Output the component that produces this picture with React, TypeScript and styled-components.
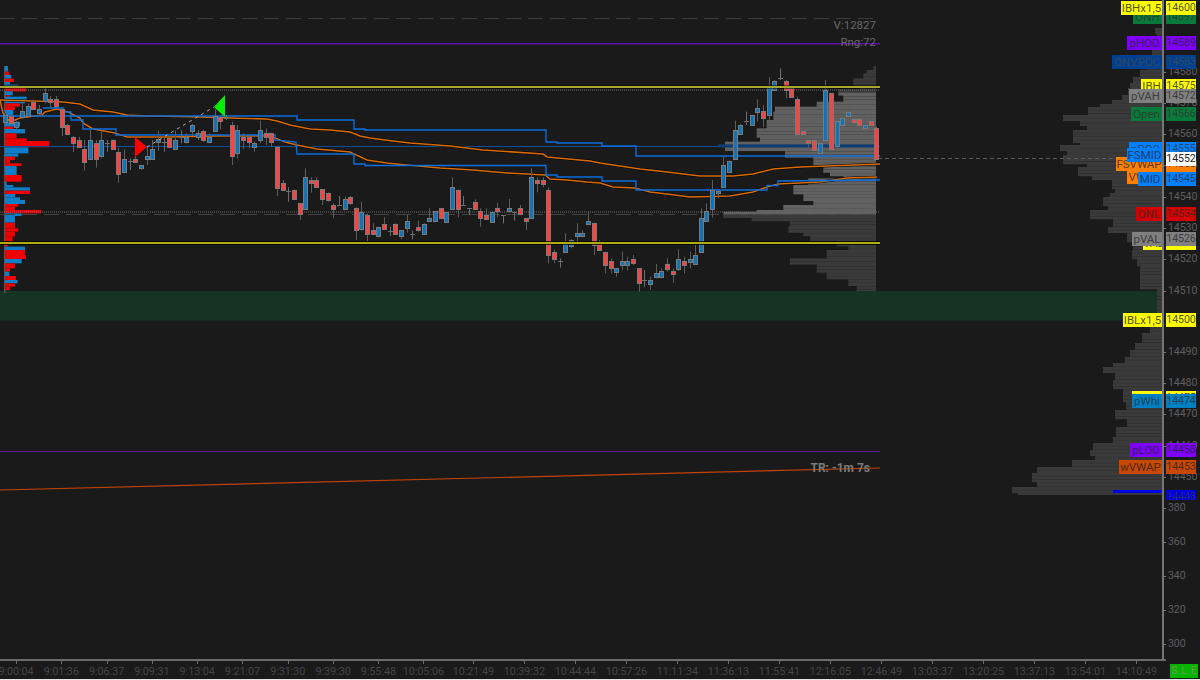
import React from "react";
import styled, { createGlobalStyle } from "styled-components";

const Global = createGlobalStyle`
  html, body { margin: 0; padding: 0; background: #1a1a1a; overflow: hidden; }
  #root { width: 1200px; height: 680px; }
`;

const FONT = `Roboto, "Open Sans", sans-serif`;

const Page = styled.div`
  width: 1200px;
  height: 680px;
  display: flex;
  flex-direction: column;
  background: #1a1a1a;
  font-family: ${FONT};
  overflow: hidden;
`;
const Main = styled.div`
  flex: 0 0 660px;
  display: flex;
`;
const Plot = styled.div`
  position: relative;
  flex: 0 0 1162px;
  height: 660px;
`;
const ChartSvg = styled.svg`
  display: block;
  width: 1162px;
  height: 660px;
`;
const Stat = styled.div<{ $y: number; $right: number; $bold?: boolean }>`
  position: absolute;
  top: ${(p) => p.$y}px;
  right: ${(p) => p.$right}px;
  font-size: ${(p) => (p.$bold ? 12 : 11.5)}px;
  line-height: 14px;
  color: ${(p) => (p.$bold ? "#7a7a7a" : "#686868")};
  font-weight: ${(p) => (p.$bold ? 700 : 400)};
`;
const PriceScale = styled.div`
  position: relative;
  flex: 0 0 38px;
  height: 660px;
  box-sizing: border-box;
  border-left: 2px solid #767676;
  z-index: 2;
`;
const ScaleMark = styled.div<{ $y: number }>`
  position: absolute;
  left: 4px;
  top: ${(p) => p.$y - 7}px;
  font-size: 10.6px;
  line-height: 14px;
  color: #5e5e5e;
  letter-spacing: -0.1px;
  &::before {
    content: "";
    position: absolute;
    left: -4px;
    top: 7px;
    width: 2px;
    height: 1px;
    background: #767676;
  }
`;
const Tag = styled.div<{ $y: number; $h: number; $bg: string; $fg: string }>`
  position: absolute;
  top: ${(p) => p.$y}px;
  height: ${(p) => p.$h}px;
  background: ${(p) => p.$bg};
  color: ${(p) => p.$fg};
  line-height: 14px;
  text-align: center;
  white-space: nowrap;
  overflow: hidden;
`;
const NameTag = styled(Tag)<{ $w: number }>`
  right: calc(100% + 2px);
  width: ${(p) => p.$w}px;
  font-size: 11.5px;
`;
const ValueTag = styled(Tag)`
  left: 2px;
  width: 30px;
  font-size: 10.6px;
  letter-spacing: -0.1px;
`;
const TimeRow = styled.div`
  flex: 1;
  display: flex;
  border-bottom: 1px solid #e6e6e6;
`;
const TimeAxis = styled.div`
  flex: 0 0 1164px;
  height: 19px;
  box-sizing: border-box;
  display: flex;
  padding-left: 16px;
  border-top: 2px solid #6a6a6a;
  margin-top: -1px;
`;
const TimeCell = styled.div<{ $w: number }>`
  position: relative;
  flex: 0 0 ${(p) => p.$w}px;
  &::before {
    content: "";
    position: absolute;
    left: 0;
    top: 0;
    width: 1px;
    height: 3px;
    background: #6a6a6a;
  }
`;
const TimeText = styled.span`
  position: absolute;
  left: 0;
  top: 4px;
  transform: translateX(-50%);
  font-size: 10.8px;
  line-height: 14px;
  letter-spacing: -0.05px;
  color: #464646;
`;
const StatusWrap = styled.div`
  flex: 1;
  display: flex;
  justify-content: flex-end;
  align-items: flex-end;
  padding: 0 2px 1px 0;
`;
const Status = styled.div`
  width: 28px;
  height: 14px;
  background: #00b400;
  color: #5f9c48;
  font-size: 10.5px;
  font-weight: 500;
  line-height: 14px;
  text-align: center;
  letter-spacing: 0.5px;
`;

type C = [number, number, number, number, number, string];
const seg1: C[] = [
  [15,165,185,165,185,"B"],[32,165,195,168,188,"R"],[49,182,208,187,203,"B"],[66,125,175,153,172,"B"],[83,130,170,138,167,"B"],
  [100,118,150,127,147,"R"],[117,135,168,146,158,"B"],[134,82,130,100,125,"B"],[151,108,145,118,128,"R"],[168,108,140,118,138,"R"],
  [185,145,228,148,203,"R"],[202,192,222,194,221,"R"],[219,228,276,232,249,"R"],[236,230,262,240,260,"R"],[253,240,332,267,305,"R"],
  [270,210,300,240,297,"B"],[287,240,323,248,297,"R"],[304,210,295,240,289,"B"],[321,240,275,248,248,"D"],[338,238,270,240,268,"R"],
  [355,262,368,276,342,"R"],[372,268,335,296,334,"B"],[389,295,330,304,304,"D"],[406,285,308,296,305,"R"],[423,315,330,316,326,"B"],
  [440,258,315,288,297,"B"],[457,240,298,268,297,"B"],[474,212,272,238,248,"B"],[491,235,275,245,245,"D"],[508,232,262,233,260,"R"],
  [525,212,270,240,268,"B"],[542,210,250,232,232,"D"],[559,220,250,232,248,"B"],[576,192,228,194,212,"B"],[593,210,240,220,232,"B"],
  [610,210,245,212,240,"R"],[627,220,250,232,248,"B"],[644,148,212,167,212,"B"],[661,170,208,172,185,"R"],[678,165,180,174,174,"D"],
  [695,185,315,195,288,"R"],[712,195,295,210,278,"B"],[729,220,268,232,240,"R"],[746,222,265,232,248,"R"],[763,245,275,248,260,"B"],
  [780,182,250,211,240,"B"],[797,205,255,220,232,"R"],[814,218,260,220,248,"R"],[831,258,408,260,382,"R"],[848,360,392,370,390,"R"],
  [865,382,425,394,394,"D"],[882,388,420,390,418,"R"],[899,428,480,428,462,"R"],
];
const seg2: C[] = [
  [15,205,330,232,327,"B"],[32,232,278,240,250,"R"],[49,232,262,240,262,"R"],[66,268,315,268,298,"R"],[83,277,305,278,300,"R"],
  [100,310,355,315,327,"R"],[117,288,318,314,314,"D"],[134,290,328,298,327,"B"],[151,288,315,290,307,"R"],[167,322,420,325,392,"R"],
  [184,305,393,335,385,"B"],[201,340,425,344,400,"R"],[218,370,402,390,402,"R"],[235,380,412,382,410,"B"],[252,352,388,371,385,"R"],
  [269,380,408,392,392,"D"],[286,370,402,371,400,"R"],[303,390,418,391,410,"B"],[320,345,398,362,384,"B"],[337,392,418,402,402,"D"],
  [354,362,395,382,392,"R"],[371,370,402,371,401,"B"],[388,325,365,354,364,"B"],[405,333,365,334,364,"B"],[422,325,358,325,355,"R"],
  [439,335,365,335,364,"B"],[456,232,328,262,327,"B"],[473,268,352,270,327,"R"],[490,288,318,314,314,"D"],[507,325,345,325,325,"D"],
  [524,298,328,307,327,"R"],[541,325,380,334,355,"R"],[558,325,358,345,356,"R"],[575,335,365,335,364,"B"],[592,308,352,325,335,"R"],
  [609,345,370,345,345,"D"],[626,297,338,325,335,"B"],[643,335,362,335,335,"D"],[660,315,345,325,343,"R"],[677,354,390,355,364,"R"],
  [694,205,357,232,355,"B"],[711,232,277,240,250,"R"],[728,232,262,240,252,"R"],[745,262,490,270,465,"R"],[762,448,490,456,477,"R"],
  [779,475,503,484,484,"D"],[796,400,458,430,458,"B"],[813,418,445,420,438,"B"],[830,370,435,400,408,"B"],[847,390,412,400,410,"B"],
  [864,335,375,364,372,"B"],[881,368,465,370,437,"R"],[898,420,450,430,450,"R"],
];
const seg3: C[] = [
  [15,575,640,577,615,"R"],[32,595,640,603,625,"R"],[49,625,650,625,636,"B"],[65,575,630,603,615,"B"],[82,590,632,603,615,"B"],
  [99,585,615,596,607,"R"],[116,625,695,625,670,"R"],[133,630,680,660,660,"D"],[150,650,690,660,672,"B"],[167,612,655,640,652,"B"],
  [184,625,655,633,652,"B"],[201,595,635,613,627,"R"],[218,625,668,633,643,"R"],[235,568,632,596,625,"B"],[252,590,640,603,614,"R"],
  [269,575,625,596,606,"B"],[286,555,615,585,613,"B"],[303,445,578,475,578,"B"],[319,430,475,454,485,"B"],[336,360,473,390,447,"B"],
  [353,390,415,393,400,"B"],[370,290,384,316,383,"B"],[387,302,335,303,335,"B"],[404,182,298,210,297,"B"],[421,192,222,195,222,"B"],
  [438,155,195,183,183,"D"],[455,165,197,166,196,"B"],[472,118,185,145,156,"B"],[489,135,202,154,176,"R"],[506,52,182,82,166,"B"],
  [523,60,90,62,90,"B"],[540,25,60,53,53,"D"],[557,60,115,62,88,"R"],[574,82,110,83,110,"R"],[591,110,248,118,222,"R"],
  [608,200,248,212,220,"R"],[625,228,275,240,250,"R"],[642,240,270,240,270,"R"],[659,240,280,248,278,"B"],[676,60,240,90,240,"B"],
  [693,100,295,100,268,"R"],[710,155,268,184,260,"B"],[727,150,205,175,195,"B"],[744,138,178,155,167,"B"],[761,175,210,176,185,"R"],
  [778,175,202,176,195,"R"],[795,165,215,195,205,"B"],[812,165,210,183,195,"R"],[829,200,298,203,297,"R"],
];
const toReal = (list: C[], ox: number, oy: number): C[] =>
  list.map(([x, a, b, c, d, k]) => [ox + x / 3, oy + a / 3, oy + b / 3, oy + c / 3, oy + d / 3, k]);
const candles = [...toReal(seg1, 0, 60), ...toReal(seg2, 300, 100), ...toReal(seg3, 600, 60)];

const pts = (l: number[][]) => l.map((p) => p.join(",")).join(" ");

const orangeUpper = [[0,100],[33,101],[63,102],[80,104],[93,110],[113,112],[127,115],[150,116],[200,117],[230,118],[267,119],[277,121],[290,125],[300,127],[310,129],[330,130],[350,132],[360,136],[370,138],[393,141],[410,143],[450,146],[483,150],[543,154],[547,157],[590,161],[600,163],[620,166],[640,169],[667,172],[700,176],[733,176],[753,174],[773,169],[800,167],[827,166],[880,164]];
const orangeLower = [[0,100],[3,113],[10,122],[20,118],[42,115],[45,112],[57,109],[68,112],[80,118],[83,123],[93,129],[115,133],[127,137],[167,137],[217,136],[267,136],[275,138],[285,142],[297,145],[317,149],[350,152],[367,160],[387,163],[407,165],[440,168],[473,170],[507,173],[545,175],[550,179],[567,180],[587,182],[600,183],[613,187],[635,188],[650,192],[667,194],[690,197],[730,196],[753,192],[767,187],[778,184],[820,182],[847,178],[877,177]];
const blueUpper = [[0,116],[297,116],[297,120],[354,120],[354,129],[365,129],[365,130],[546,130],[546,142],[557,142],[557,143],[602,143],[602,146],[636,146],[636,156],[880,156]];
const blueLower = [[43,108],[63,108],[63,112],[71,112],[71,120],[83,120],[83,129],[116,129],[116,135],[275,135],[275,140],[296,142],[297,154],[354,154],[354,164],[365,164],[365,165.5],[546,165.5],[546,175],[557,175],[557,177],[602,177],[602,181],[636,181],[636,190],[767,190],[767,185.5],[778,185.5],[778,181],[880,180]];

// [zoomY0, zoomY1, zoomXEnd, colour] of the session volume profile on the left
const leftRows: [number, number, number, string][] = [
  [18,35,24,"B"],[35,45,28,"R"],[45,56,34,"B"],[56,66,42,"R"],[66,74,30,"B"],[74,84,55,"B"],[84,94,78,"R"],[94,106,38,"B"],[106,110,30,"R"],[110,122,80,"B"],[122,130,75,"B"],
  [130,140,60,"R"],[140,150,45,"R"],[150,165,40,"B"],[165,185,30,"R"],[185,200,60,"B"],[200,207,40,"R"],[207,220,75,"B"],[220,235,50,"R"],
  [235,243,80,"R"],[243,262,148,"R"],[262,280,85,"B"],[280,290,55,"B"],[290,300,45,"R"],[300,310,30,"R"],[310,318,65,"R"],[318,345,50,"B"],[345,365,65,"R"],
  [365,375,20,"B"],[375,382,40,"B"],[382,392,90,"B"],[392,402,90,"R"],[402,412,45,"B"],[412,420,60,"B"],[420,432,75,"B"],[432,440,55,"R"],[440,450,45,"R"],[450,460,124,"R"],
  [460,468,65,"B"],[468,488,45,"B"],[488,505,45,"R"],[505,515,55,"R"],[515,530,45,"R"],[530,545,38,"R"],[545,560,24,"R"],[560,570,75,"B"],[570,585,75,"R"],
  [585,597,78,"R"],[597,610,65,"B"],[610,625,45,"R"],[625,635,30,"R"],[635,648,28,"B"],[648,660,48,"R"],[660,670,53,"B"],[670,680,45,"R"],[680,690,30,"R"],
];

// Steps: [zoomY, zoomX of left edge]
const sessionSteps: number[][] = [
  [18,820],[30,800],[40,790],[55,760],[75,778],[88,715],[100,730],[125,650],[140,525],[155,520],[180,500],[205,470],[230,480],[245,375],[265,555],
  [290,640],[310,670],[330,690],[345,730],[355,625],[375,580],[395,610],[420,640],[435,550],[450,470],[455,370],[465,455],[475,570],[500,565],
  [510,610],[525,630],[540,710],[555,745],[570,680],[595,570],[610,650],[630,680],[650,745],[670,770],[690,800],[700,820],
];
// real y, real x
const farSteps: number[][] = [
  [28,1155],[33,1157],[43,1155],[50,1152],[55,1147],[63,1147],[70,1140],[77,1133],[83,1130],[88,1128],[95,1122],[100,1112],[104,1100],[107,1088],[115,1063],[120,1080],[125,1087],[130,1073],[137,1073],[142,1080],[145,1060],[150,1067],[155,1063],[163,1087],
  [167,1078],[174,1092],[180,1112],[187,1115],[193,1110],
  [197,1103],[204,1108],[210,1090],[217,1113],[227,1108],[233,1127],[240,1133],[250,1132],[257,1137],[265,1140],[277,1140],[287,1157],[300,1155],[307,1157],
  [313,1155],[325,1150],[333,1142],[343,1135],[350,1130],[357,1125],[363,1113],[367,1103],[373,1115],[380,1113],[387,1123],[393,1123],[400,1126],[410,1115],
  [417,1127],[427,1116],[437,1113],[443,1093],[450,1090],[455,1095],[460,1072],[467,1037],[473,1032],[480,1037],[487,1012],[492,1018],
];

const rowsFrom = (steps: number[][], end: number) => {
  const out: { y: number; x: number }[] = [];
  for (let i = 0; i < steps.length; i++) {
    const y1 = i + 1 < steps.length ? steps[i + 1][0] : end;
    let y = steps[i][0];
    while (y < y1) {
      out.push({ y, x: steps[i][1] });
      y += 3.12;
    }
  }
  return out;
};
const sessionRows = rowsFrom(sessionSteps.map(([y, x]) => [60 + y / 3, 600 + x / 3]), 293);
const farRows = rowsFrom(farSteps, 494);

const times: [string, number][] = [
  ["9:00:04",45.3],["9:01:36",45.3],["9:06:37",45.3],["9:09:31",45.3],["9:13:04",45.3],["9:21:07",45.3],["9:31:30",45.3],["9:39:30",45.3],
  ["9:55:48",45],["10:05:06",50],["10:21:49",51],["10:39:32",51],["10:44:44",51],["10:57:26",51],["11:11:34",51],["11:36:13",51],["11:55:41",51],
  ["12:16:05",51],["12:46:49",51],["13:03:37",51],["13:20:25",51],["13:37:13",51],["13:54:01",51],["14:10:49",30],
];

const scaleMarks: [string, number][] = [
  ["14580",72],["14570",103],["14560",134],["14550",165],["14540",197],["14530",228],["14520",259],["14510",291],["14490",352],["14480",383],["14470",414],["14460",446],["14450",477],
  ["380",508],["360",542],["340",576],["320",610],["300",644],
];

const DIM = "#4c4c4c";
type T = { name?: string; left?: number; value: string; y: number; h?: number; bg: string; fg?: string; vbg?: string };
const tags: T[] = [
  { name: "ONH", left: 1133, value: "14597", y: 10, bg: "#0a7a3c", fg: "#24452e" },
  { name: "IBHx1,5", left: 1121, value: "14600", y: 1, bg: "#ffff00", fg: "#55551a" },
  { name: "pHOD", left: 1127, value: "14589", y: 36, bg: "#8000ff", fg: "#35205a" },
  { name: "ONVPOC", left: 1112, value: "14583", y: 55, bg: "#004090", fg: "#32475e" },
  { name: "IBH", left: 1141, value: "14575", y: 79, bg: "#ffff00", fg: "#55551a" },
  { name: "pVAH", left: 1129, value: "14572", y: 89, bg: "#808080", fg: "#3c3c3c" },
  { name: "Open", left: 1131, value: "14566", y: 107, bg: "#0a7a3c", fg: "#24452e" },
  { name: "pPOC", left: 1129, value: "14555", y: 142, bg: "#0080ff", fg: "#244a70" },
  { name: "FSVWAP", left: 1116, value: "14550", y: 157, bg: "#ff8000", fg: "#5a3c18" },
  { name: "FSMID", left: 1127, value: "14552", y: 148, bg: "#0080ff", fg: "#1c3f66", vbg: "#ffffff" },
  { name: "VWAP", left: 1127, value: "14546", y: 170, bg: "#ff8000", fg: "#5a3c18" },
  { name: "MID", left: 1138, value: "14545", y: 172, bg: "#0080ff", fg: "#1c3f66" },
  { name: "ONL", left: 1136, value: "14534", y: 207, bg: "#d40000", fg: "#5a2020" },
  { name: "VAL", left: 1143, value: "14525", y: 236, bg: "#ffff00", fg: "#55551a" },
  { name: "pVAL", left: 1132, value: "14526", y: 232, bg: "#808080", fg: "#3c3c3c" },
  { name: "IBLx1,5", left: 1123, value: "14500", y: 313, bg: "#ffff00", fg: "#55551a" },
  { name: "pWhl", left: 1132, value: "14475", y: 391, bg: "#ffff00", fg: "#55551a" },
  { name: "pWhi", left: 1132, value: "14474", y: 394, bg: "#0080c0", fg: "#1f4258" },
  { name: "pLOD", left: 1130, value: "14458", y: 443, bg: "#8000ff", fg: "#35205a" },
  { name: "wVWAP", left: 1119, value: "14453", y: 460, bg: "#c84800", fg: "#4a2a14" },
];

const Candle: React.FC<{ c: C }> = ({ c: [x, wt, wb, bt, bb, k] }) => {
  const cx = Math.round(x) + 0.5;
  if (k === "D") {
    return (
      <g stroke="#6e6e6e" strokeWidth={1}>
        <line x1={cx} x2={cx} y1={wt} y2={wb} />
        <line x1={cx - 2.5} x2={cx + 2.5} y1={Math.round(bt) + 0.5} y2={Math.round(bt) + 0.5} />
      </g>
    );
  }
  const top = Math.round(bt) + 0.5;
  const h = Math.max(2, Math.round(bb - bt));
  return (
    <g>
      <line x1={cx} x2={cx} y1={wt} y2={wb} stroke="#5c5c5c" strokeWidth={1} />
      <rect x={cx - 2} y={top} width={4} height={h} fill={k === "R" ? "#ff4040" : "#1273b8"} stroke="#7a7a7a" strokeWidth={1} />
    </g>
  );
};

const Chart: React.FC = () => (
  <ChartSvg viewBox="0 0 1162 660">
    {farRows.map((r, i) => (
      <rect key={i} x={r.x} y={r.y} width={1162 - r.x} height={2.95} fill="#3a3a3a" />
    ))}
    {sessionRows.map((r, i) => (
      <rect key={i} x={r.x} y={r.y} width={876 - r.x} height={3.12} fill={r.y >= 90 && r.y < 212 ? "#616161" : "#3a3a3a"} />
    ))}
    <rect x={0} y={291} width={1157} height={29.5} fill="#163423" />

    <rect x={4} y={66} width={1.6} height={227} fill="#555555" />
    {leftRows.map(([a, b, e, k], i) => (
      <rect key={i} x={5} y={60 + a / 3} width={(e - 15) / 3} height={(b - a) / 3} fill={k === "R" ? "#ee0000" : "#0f7ec8"} />
    ))}

    <line x1={0} x2={880} y1={18.5} y2={18.5} stroke="#3d3d3d" strokeDasharray="15 7" />
    <line x1={0} x2={880} y1={43.7} y2={43.7} stroke="#5d10a8" strokeWidth={1.5} />
    <line x1={0} x2={880} y1={90} y2={90} stroke="#6a6a6a" strokeWidth={1.2} strokeDasharray="1 1" />
    <line x1={0} x2={880} y1={212} y2={212} stroke="#6a6a6a" strokeWidth={1.2} strokeDasharray="1 1" />
    <line x1={0} x2={880} y1={214.5} y2={214.5} stroke="#444444" strokeDasharray="15 7" />
    <line x1={0} x2={880} y1={451.5} y2={451.5} stroke="#5b1b9e" strokeWidth={1.2} />
    <line x1={0} x2={880} y1={490} y2={468} stroke="#c44200" strokeWidth={1.2} />
    <line x1={878} x2={1140} y1={158.5} y2={158.5} stroke="#5a5a5a" strokeDasharray="4 3" />

    <line x1={0} x2={880} y1={146.5} y2={146.5} stroke="#0a4f9e" strokeWidth={1.2} />
    <line x1={718} x2={876} y1={146} y2={146} stroke="#0b3c78" strokeWidth={3} />

    <polyline points={pts(orangeUpper)} fill="none" stroke="#000" strokeWidth={2.6} />
    <polyline points={pts(orangeLower)} fill="none" stroke="#000" strokeWidth={2.6} />
    <polyline points={pts(orangeUpper)} fill="none" stroke="#d96c00" strokeWidth={1.6} />
    <polyline points={pts(orangeLower)} fill="none" stroke="#d96c00" strokeWidth={1.6} />
    <polyline points={pts(blueUpper)} fill="none" stroke="#0a6fe0" strokeWidth={1.35} />
    <polyline points={pts(blueLower)} fill="none" stroke="#0a6fe0" strokeWidth={1.35} />

    {candles.map((c, i) => (
      <Candle key={i} c={c} />
    ))}

    <line x1={147} y1={147} x2={214} y2={107} stroke="#b0b0b0" strokeDasharray="3 4" />
    <polygon points="135,137 135,157 147,147" fill="#ff0000" />
    <polygon points="225,95 225,117 214,107" fill="#00f000" />

    <line x1={0} x2={880} y1={87} y2={87} stroke="#000" strokeWidth={3} />
    <line x1={0} x2={880} y1={87} y2={87} stroke="#e0e040" strokeWidth={1.7} />
    <line x1={0} x2={880} y1={243} y2={243} stroke="#000" strokeWidth={3.4} />
    <line x1={0} x2={880} y1={243} y2={243} stroke="#e8e814" strokeWidth={1.7} />
    <rect x={1113} y={490} width={49} height={3} fill="#0000e6" />
  </ChartSvg>
);

export default function App() {
  return (
    <Page>
      <Global />
      <Main>
        <Plot>
          <Chart />
          <Stat $y={18} $right={286}>V:12827</Stat>
          <Stat $y={35} $right={286}>Rng:72</Stat>
          <Stat $y={461} $right={292} $bold>TR: -1m 7s</Stat>
        </Plot>
        <PriceScale>
          {scaleMarks.map(([t, y]) => (
            <ScaleMark key={t} $y={y}>{t}</ScaleMark>
          ))}
          {tags.map((t) => (
            <React.Fragment key={t.value}>
              {t.name && (
                <NameTag $y={t.y} $h={t.h ?? 14} $bg={t.bg} $fg={t.fg ?? DIM} $w={1162 - (t.left ?? 1130)}>
                  {t.name}
                </NameTag>
              )}
              <ValueTag $y={t.vbg ? t.y + 4 : t.y} $h={t.h ?? 14} $bg={t.vbg ?? t.bg} $fg={t.vbg ? "#222" : t.fg ?? DIM}>
                {t.value}
              </ValueTag>
            </React.Fragment>
          ))}
          <ValueTag $y={490} $h={10} $bg="#0000e0" $fg="#2a2a70">14443</ValueTag>
        </PriceScale>
      </Main>
      <TimeRow>
        <TimeAxis>
          {times.map(([t, w]) => (
            <TimeCell key={t} $w={w}>
              <TimeText>{t}</TimeText>
            </TimeCell>
          ))}
        </TimeAxis>
        <StatusWrap>
          <Status>S L E</Status>
        </StatusWrap>
      </TimeRow>
    </Page>
  );
}
